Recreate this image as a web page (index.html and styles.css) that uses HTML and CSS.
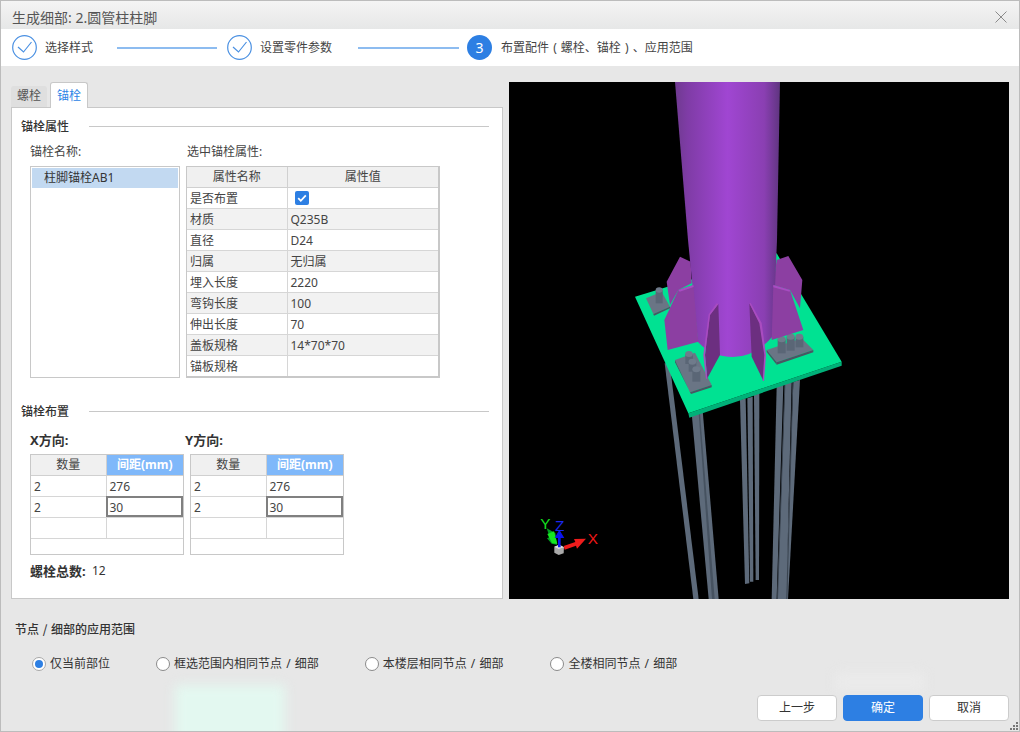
FILE: index.html
```html
<!DOCTYPE html>
<html lang="zh-CN">
<head>
<meta charset="utf-8">
<title>生成细部</title>
<link rel="stylesheet" href="styles.css">
</head>
<body>
<div class="dialog">
  <div class="glow glow-green"></div>
  <div class="glow glow-light"></div>

  <header class="titlebar">
    <span class="title">生成细部: 2.圆管柱柱脚</span>
    <svg class="close" width="12" height="12" viewBox="0 0 12 12"><path d="M.5.5l11 11M11.5.5l-11 11" stroke="#8a8a8a" stroke-width="1" fill="none"/></svg>
  </header>

  <nav class="steps">
    <svg class="step-icon" width="25" height="25" viewBox="0 0 25 25"><circle cx="12.5" cy="12.5" r="11.8" fill="#fff" stroke="#4a90e2" stroke-width="1.2"/><path d="M6 12l5.500 5L19.500 7" fill="none" stroke="#4a90e2" stroke-width="1.2"/></svg>
    <span class="step-text">选择样式</span>
    <span class="step-line"></span>
    <svg class="step-icon" width="25" height="25" viewBox="0 0 25 25"><circle cx="12.5" cy="12.5" r="11.8" fill="#fff" stroke="#4a90e2" stroke-width="1.2"/><path d="M6 12l5.500 5L19.500 7" fill="none" stroke="#4a90e2" stroke-width="1.2"/></svg>
    <span class="step-text">设置零件参数</span>
    <span class="step-line step-line-b"></span>
    <span class="step-num">3</span>
    <span class="step-text step-text-spaced">布置配件 ( 螺栓、锚栓 ) 、应用范围</span>
  </nav>

  <main class="main">
    <section class="left">
      <div class="tabs">
        <span class="tab">螺栓</span>
        <span class="tab tab-active">锚栓</span>
      </div>
      <div class="panel">
        <div class="heading"><span class="heading-text">锚栓属性</span><span class="heading-line"></span></div>
        <div class="attrs">
          <div class="attr-names">
            <div class="label">锚栓名称:</div>
            <div class="listbox"><div class="list-item">柱脚锚栓AB1</div></div>
          </div>
          <div class="attr-props">
            <div class="label label-props">选中锚栓属性:</div>
            <div class="prop-box">
              <table class="prop-table">
                <colgroup><col class="prop-col-a"><col></colgroup>
                <tr><th>属性名称</th><th>属性值</th></tr>
                <tr><td>是否布置</td><td class="check-cell"><span class="checkbox"><svg width="14" height="14" viewBox="0 0 14 14"><path d="M3.200 7.200l2.600 2.600 5-5.400" fill="none" stroke="#fff" stroke-width="1.800"/></svg></span></td></tr>
                <tr><td>材质</td><td>Q235B</td></tr>
                <tr><td>直径</td><td>D24</td></tr>
                <tr><td>归属</td><td>无归属</td></tr>
                <tr><td>埋入长度</td><td>2220</td></tr>
                <tr><td>弯钩长度</td><td>100</td></tr>
                <tr><td>伸出长度</td><td>70</td></tr>
                <tr><td>盖板规格</td><td>14*70*70</td></tr>
                <tr><td>锚板规格</td><td></td></tr>
              </table>
            </div>
          </div>
        </div>

        <div class="heading heading-second"><span class="heading-text">锚栓布置</span><span class="heading-line"></span></div>
        <div class="layout">
          <div class="dir">
            <div class="dir-label">X方向:</div>
            <div class="grid-box">
              <table class="grid-table">
                <colgroup><col class="grid-col-a"><col></colgroup>
                <tr><th>数量</th><th class="th-active">间距(mm)</th></tr>
                <tr><td>2</td><td>276</td></tr>
                <tr><td>2</td><td class="cell-active">30</td></tr>
                <tr><td></td><td></td></tr>
              </table>
            </div>
          </div>
          <div class="dir">
            <div class="dir-label dir-label-y">Y方向:</div>
            <div class="grid-box">
              <table class="grid-table">
                <colgroup><col class="grid-col-a"><col></colgroup>
                <tr><th>数量</th><th class="th-active">间距(mm)</th></tr>
                <tr><td>2</td><td>276</td></tr>
                <tr><td>2</td><td class="cell-active">30</td></tr>
                <tr><td></td><td></td></tr>
              </table>
            </div>
          </div>
        </div>
        <div class="total"><span class="total-label">螺栓总数:</span><span class="total-value">12</span></div>
      </div>
    </section>

    <div class="viewport">
      <svg class="scene" width="500" height="517" viewBox="509 82 500 517">
        <defs>
          <linearGradient id="col" gradientUnits="userSpaceOnUse" x1="675" y1="0" x2="780" y2="0">
            <stop offset="0" stop-color="#6f3a90"/>
            <stop offset=".12" stop-color="#7f3ca6"/>
            <stop offset=".5" stop-color="#a046d2"/>
            <stop offset=".85" stop-color="#8a3fb2"/>
            <stop offset="1" stop-color="#5f3580"/>
          </linearGradient>
        </defs>
        <g transform="translate(520 380) scale(.33333)" fill="#5d6a7a">
          <path d="M434-50h15l87 707h-16z"/>
          <path d="M515 100l33-8 48 565h-30z"/>
          <path d="M536 100l4 0 44 557h-8z" fill="#465260"/>
          <path d="M660 60l17-5 11 555-13 2z"/>
          <path d="M682 55l16-5 2 555-10 0z"/>
          <path d="M702 45l16-5-1 560-10 0z"/>
          <path d="M770 20l20-5-20 642h-15z"/>
          <path d="M795 12l20-7-16 652h-27z"/>
          <path d="M820 5l20-5-36 657h-8z"/>
          <path d="M793 15l3 0-22 642h-3zM817 5l3 0-18 652h-3z" fill="#39434f"/>
        </g>
        <g transform="translate(620 240) scale(.33333)">
          <path d="M205 520L665 365v12L208 533z" fill="#00b078"/>
          <path d="M45 170L470 40l195 325L205 520z" fill="#00e292"/>
          <!-- back ribs -->
          <path d="M180 50l32 15 3 65-40 20-25 45-10-70z" fill="#8c3fa2"/>
          <path d="M470 60l35-12 42 72-7 85-30-55-50-15z" fill="#8c3fa2"/>
          <!-- washers and bolts -->
          <path d="M78 175l47-20 25 45-50 22z" fill="#6a7585"/>
          <path d="M100 222l50-22 0 5-48 22z" fill="#4a5563"/>
          <path d="M107 150v40h21v-40z" fill="#5a6676"/><ellipse cx="117.500" cy="150" rx="10.500" ry="8" fill="#6f7b8b"/>
          <path d="M165 360l60-22 50 97-65 22z" fill="#6a7585"/>
          <path d="M210 457l65-22v7l-62 20z" fill="#4a5563"/>
          <path d="M165 360l45 97 3 5-48-95z" fill="#4a5563"/>
          <path d="M196 342v30h23v-30z" fill="#5a6676"/><ellipse cx="207" cy="342" rx="11.500" ry="9" fill="#6f7b8b"/>
          <path d="M206 365v30h23v-30z" fill="#5a6676"/><ellipse cx="217" cy="365" rx="11.500" ry="9" fill="#6f7b8b"/>
          <path d="M217 388v37h24v-37z" fill="#5a6676"/><ellipse cx="229" cy="388" rx="12" ry="9" fill="#6f7b8b"/>
          <path d="M440 330l105-35 35 35-110 37z" fill="#6a7585"/>
          <path d="M440 330l30 37 0 7-30-38z" fill="#4a5563"/>
          <path d="M470 367l110-37v7l-110 37z" fill="#4a5563"/>
          <path d="M473 298v42h24v-42z" fill="#5a6676"/><ellipse cx="485" cy="298" rx="12" ry="9" fill="#6f7b8b"/>
          <path d="M500 290v42h24v-42z" fill="#5a6676"/><ellipse cx="512" cy="290" rx="12" ry="9" fill="#6f7b8b"/>
          <path d="M527 290v32h23v-32z" fill="#5a6676"/><ellipse cx="538" cy="290" rx="11.500" ry="9" fill="#6f7b8b"/>
        </g>
        <path d="M675 82h105l-3 158-4 96q-18 21-40 21-21 0-35-15L688 240z" fill="url(#col)"/>
        <g transform="translate(620 240) scale(.33333)">
          <!-- front ribs -->
          <path d="M175 150l45-15 15 170-92 25-10-90z" fill="#8c3fa2"/>
          <path d="M175 150l45-15 1 6-42 14z" fill="#a84cc2"/>
          <path d="M460 135l50 15 40 120-95 30z" fill="#8c3fa2"/>
          <path d="M460 135l50 15-1 5-49-13z" fill="#a84cc2"/>
          <path d="M295 192l5 153-38 70-7-70 15-120z" fill="#6c2f80"/>
          <path d="M290 190l5 2-25 33-15 120 7 70-4 2-8-72 16-122z" fill="#a94cc0"/>
          <path d="M388 190l32 60 15 95-5 77-35-72z" fill="#6c2f80"/>
          <path d="M388 190l4-1 33 60 13 96-6 78-4-1 5-77-15-95z" fill="#a94cc0"/>
        </g>
        <!-- axis gizmo -->
        <g transform="translate(520 380) scale(.33333)">
          <path d="M103 500l15-6 14 8-1 18-15 5-13-7z" fill="#a9a9a9"/>
          <path d="M103 500l15-6 14 8-16 5z" fill="#e0e0e0"/>
          <path d="M80 445l26 14 5 35-16-3-14-16 8-4z" fill="#00a020"/>
          <path d="M82 462l20-8 10 38-16-3z" fill="#16e620"/>
          <path d="M131 498l35-12-4-9 36-1-27 30-3-9-34 12z" fill="#ef1c1c"/>
          <path d="M114 502v-28h-10l14-25 15 25h-11v28z" fill="#0a14f0"/>
          <text class="gizmo gizmo-y" x="61" y="448">Y</text>
          <text class="gizmo gizmo-z" x="105" y="454">Z</text>
          <text class="gizmo gizmo-x" x="203" y="491">X</text>
        </g>
      </svg>
    </div>
  </main>

  <footer class="footer">
    <div class="scope-title">节点 / 细部的应用范围</div>
    <div class="radios">
      <label class="radio"><span class="radio-dot radio-on"></span>仅当前部位</label>
      <label class="radio"><span class="radio-dot"></span>框选范围内相同节点 / 细部</label>
      <label class="radio"><span class="radio-dot"></span>本楼层相同节点 / 细部</label>
      <label class="radio radio-last"><span class="radio-dot"></span>全楼相同节点 / 细部</label>
    </div>
    <div class="actions">
      <button class="btn">上一步</button>
      <button class="btn btn-primary">确定</button>
      <button class="btn">取消</button>
    </div>
  </footer>

  <svg class="grip" width="9" height="9" viewBox="0 0 9 9" fill="#777"><rect x="6" y="0" width="2" height="2"/><rect x="3" y="3" width="2" height="2"/><rect x="6" y="3" width="2" height="2"/><rect x="0" y="6" width="2" height="2"/><rect x="3" y="6" width="2" height="2"/><rect x="6" y="6" width="2" height="2"/></svg>
</div>
</body>
</html>
```

FILE: styles.css
```css
* { box-sizing: border-box; }
html, body { margin: 0; padding: 0; }
body {
  width: 1020px;
  height: 732px;
  overflow: hidden;
  font-family: "Noto Sans", "Noto Sans CJK SC", sans-serif;
  font-size: 12px;
  color: #333;
}
.dialog {
  position: relative;
  width: 1020px;
  height: 732px;
  border: 1px solid #bcbcbc;
  background: #e7e7e7;
  display: flex;
  flex-direction: column;
  overflow: hidden;
}
.glow { position: absolute; filter: blur(6px); }
.glow-green { left: 174px; top: 684px; width: 110px; height: 60px; background: #e3f8f0; }
.glow-light { left: 835px; top: 672px; width: 88px; height: 18px; background: #ebebeb; }

.titlebar {
  position: relative;
  height: 28px;
  flex: none;
  display: flex;
  align-items: center;
  justify-content: space-between;
  padding: 5px 12px 0 11px;
  background: linear-gradient(#f4f4f4, #e6e7e7);
}
.title { font-size: 14px; line-height: 20px; color: #555; }
.close { margin-top: -2px; }

.steps {
  position: relative;
  height: 37px;
  flex: none;
  display: flex;
  align-items: center;
  padding-left: 11px;
  background: #fff;
}
.step-icon { flex: none; }
.step-text { margin-left: 8px; line-height: 16px; white-space: nowrap; color: #444; }
.step-text-spaced { margin-left: 9px; word-spacing: 1px; }
.step-line { width: 100px; height: 2px; margin: 0 10px 0 24px; background: #8dbcf0; }
.step-line-b { width: 101px; margin: 0 8px 0 26px; }
.step-num {
  flex: none;
  width: 25px;
  height: 25px;
  border-radius: 50%;
  background: #2d7fe3;
  color: #fff;
  font-size: 14px;
  line-height: 25px;
  text-align: center;
}

.main {
  position: relative;
  flex: none;
  height: 533px;
  padding: 16px 10px 0 10px;
  display: flex;
  gap: 6px;
}
.left { width: 492px; flex: none; }
.tabs { height: 25px; display: flex; align-items: flex-end; gap: 3px; position: relative; z-index: 1; }
.tab {
  width: 36px;
  height: 21px;
  line-height: 20px;
  text-align: center;
  background: #dfdfdf;
  color: #555;
  border-radius: 3px 3px 0 0;
}
.tab-active {
  width: 38px;
  height: 26px;
  margin-bottom: -1px;
  line-height: 25px;
  background: #fff;
  color: #2d84e6;
  border: 1px solid #c8c8c8;
  border-bottom: none;
}
.panel {
  height: 492px;
  padding: 10px 13px 0 9px;
  background: #fff;
  border: 1px solid #c8c8c8;
}
.heading { display: flex; align-items: center; height: 16px; }
.heading-second { margin-top: 25px; }
.heading-text { font-weight: 500; line-height: 16px; width: 68px; flex: none; color: #333; font-family: "Noto Sans CJK SC", sans-serif; }
.heading-line { flex: 1; height: 1px; background: #c8c8c8; }

.attrs { display: flex; gap: 6px; margin-top: 10px; padding-left: 9px; }
.attr-names { width: 150px; flex: none; }
.attr-props { width: 254px; flex: none; }
.label { height: 16px; line-height: 16px; margin-bottom: 6px; color: #444; }
.label-props { padding-left: 1px; }
.listbox { height: 212px; border: 1px solid #c8c8c8; padding: 1px; background: #fff; }
.list-item { height: 20px; line-height: 20px; padding-left: 12px; background: #c2d9f1; color: #333; }

.prop-box { height: 212px; border: 1px solid #c8c8c8; border-width: 1px 2px 2px 1px; background: #fff; }
.prop-table, .grid-table { width: 100%; table-layout: fixed; border-collapse: collapse; }
.prop-table th, .grid-table th {
  height: 20px;
  padding: 1px 0 0;
  font-weight: 400;
  background: #f0f0f0;
  border-bottom: 1px solid #d0d0d0;
  border-right: 1px solid #d0d0d0;
  line-height: 16px;
  color: #444;
}
.prop-table td, .grid-table td {
  height: 21px;
  padding: 2px 0 0 3px;
  line-height: 16px;
  border-bottom: 1px solid #d6d6d6;
  border-right: 1px solid #d6d6d6;
  color: #444;
}
.prop-col-a { width: 100px; }
.prop-table tr:nth-child(odd) td { background: #f2f2f2; }
.prop-table tr td:last-child, .prop-table tr th:last-child { border-right: none; }
.prop-table tr:last-child td { border-bottom: none; }
.check-cell { padding-top: 1px !important; padding-left: 7px !important; }
.checkbox { display: block; width: 14px; height: 14px; border-radius: 2px; background: #2d7fe3; }
.checkbox svg { display: block; }

.layout { display: flex; gap: 6px; margin-top: 13px; padding-left: 9px; }
.dir { width: 154px; flex: none; }
.dir-label { height: 16px; font-size: 13px; line-height: 16px; margin-bottom: 6px; font-weight: 700; color: #333; white-space: nowrap; }
.dir-label-y { margin-left: -5px; }
.grid-box { height: 101px; border: 1px solid #c8c8c8; background: #fff; }
.grid-col-a { width: 75px; }
.grid-table tr td:last-child, .grid-table tr th:last-child { border-right: none; }
.th-active { background: #7fb8fa !important; color: #fff !important; font-weight: 700 !important; }
.cell-active { outline: 2px solid #808080; outline-offset: -2px; }

.total { display: flex; margin-top: 8px; padding-left: 9px; line-height: 16px; }
.total-label { font-size: 13px; font-weight: 700; width: 62px; flex: none; color: #333; }

.viewport { width: 500px; height: 517px; flex: none; background: #000; overflow: hidden; }
.scene { display: block; }
.gizmo { font-family: "Liberation Sans", sans-serif; font-size: 46px; }
.gizmo-x { fill: #f01818; }
.gizmo-y { fill: #14e020; }
.gizmo-z { fill: #1a28f0; }

.footer { position: relative; flex: 1; padding: 22px 10px 0 14px; }
.scope-title { height: 16px; line-height: 16px; font-family: "Noto Sans CJK SC", sans-serif; font-weight: 500; color: #333; word-spacing: 1px; }
.radios { display: flex; gap: 46px; margin-top: 19px; padding-left: 17px; word-spacing: 1px; }
.radio { display: flex; align-items: center; height: 16px; line-height: 16px; color: #333; white-space: nowrap; }
.radio-last { margin-left: 1px; }
.radio-dot {
  width: 14px;
  height: 14px;
  margin-right: 4px;
  flex: none;
  border-radius: 50%;
  background: #fff;
  border: 1px solid #8a8a8a;
}
.radio-on { position: relative; border-color: #a8a8a8; }
.radio-on::after {
  content: "";
  position: absolute;
  left: 2px;
  top: 2px;
  width: 8px;
  height: 8px;
  border-radius: 50%;
  background: #2d7fe3;
}
.actions { display: flex; justify-content: flex-end; gap: 6px; margin-top: 23px; }
.btn {
  width: 80px;
  height: 26px;
  padding: 0;
  font: inherit;
  line-height: 24px;
  color: #333;
  background: #fff;
  border: 1px solid #ccc;
  border-radius: 4px;
}
.btn-primary { background: #2d7fe3; border-color: #2d7fe3; color: #fff; }
.grip { position: absolute; right: 0; bottom: 0; }
```
